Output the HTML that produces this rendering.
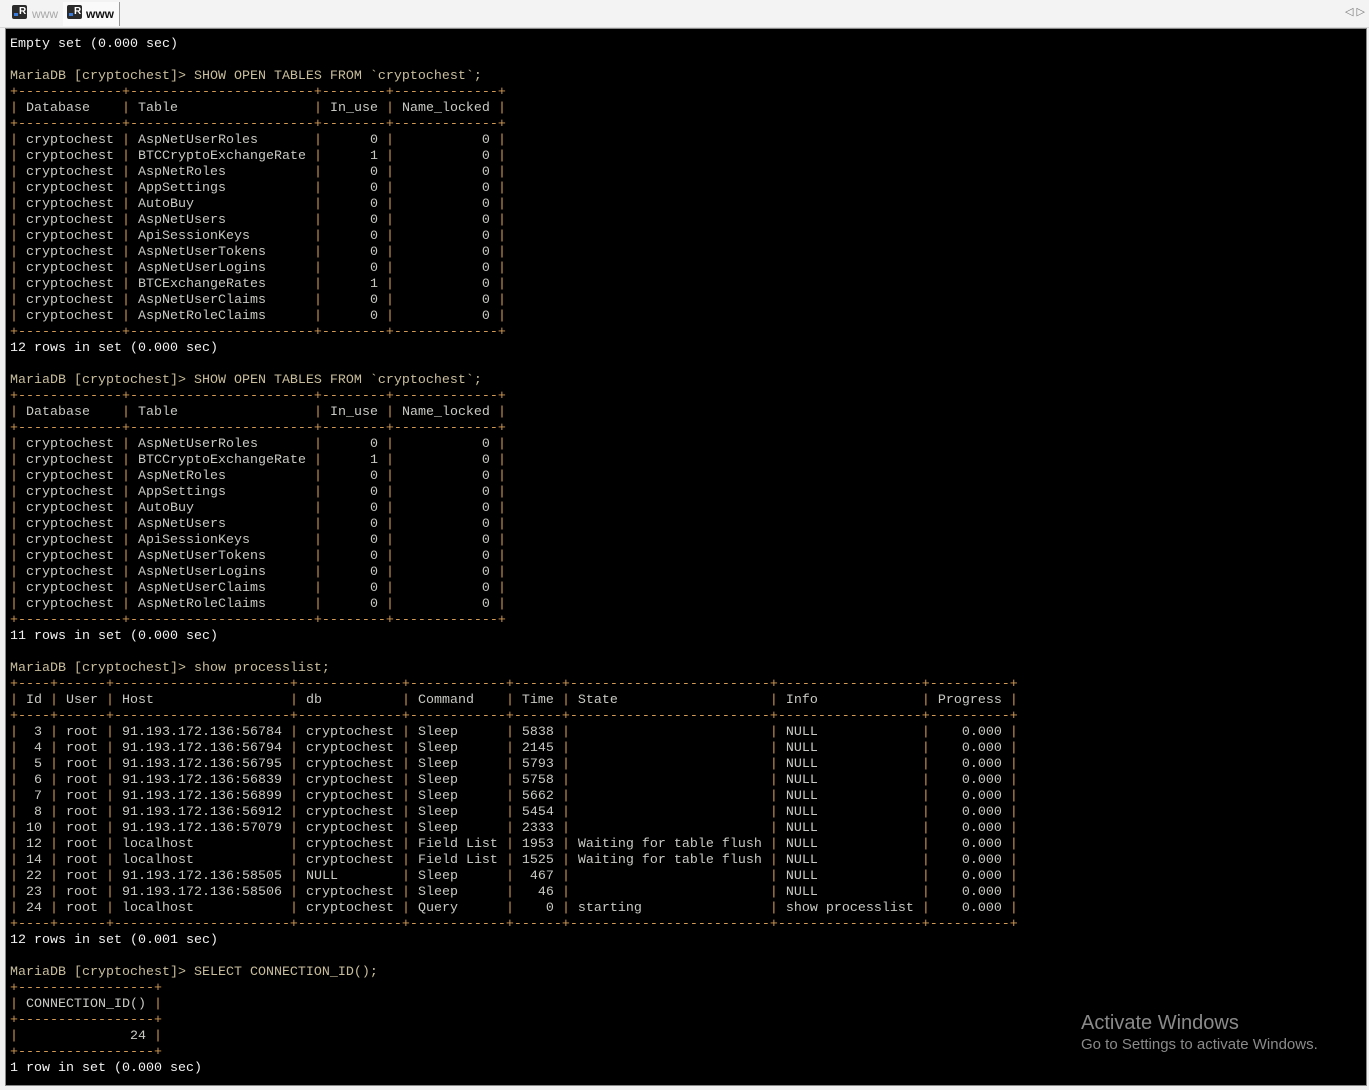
<!DOCTYPE html>
<html><head><meta charset="utf-8"><style>
html,body{margin:0;padding:0;width:1369px;height:1090px;overflow:hidden;background:#f0f0f0;font-family:"Liberation Sans",sans-serif}
#bar{position:absolute;left:0;top:0;width:1369px;height:27px;background:#f3f3f3;border-bottom:1px solid #d8d8d8}
.ico{position:absolute;top:5px;width:15px;height:14px;background:#2a2a2a;border-radius:2px}
.ico i{position:absolute;left:2px;bottom:3px;width:4px;height:3px;background:#3a7ad8}
.ico s{position:absolute;left:7px;top:1px;color:#fff;font:bold 10px "Liberation Sans",sans-serif;text-decoration:none}
#term{position:absolute;left:5px;top:28px;width:1360px;height:1056px;background:#000;border:1px solid #888}
pre{position:absolute;left:10px;top:37px;margin:0;font-family:"Liberation Mono",monospace;font-size:13.33px;line-height:16px;color:#c9c9c4}
b{font-weight:normal;color:#d39a55}
.w{color:#f2f2f2}.p{color:#c8bd9c}
#act{position:absolute;left:1081px;top:1012px;color:#8a8a8a}
</style></head><body>
<div id="bar">
<div class="ico" style="left:12px"><i></i><s>R</s></div>
<span style="position:absolute;left:32px;top:7px;font-size:12px;color:#a8a8a8">www</span>
<div style="position:absolute;left:63px;top:2px;width:56px;height:24px;background:#fafafa;border-right:1px solid #999"></div>
<div class="ico" style="left:67px"><i></i><s>R</s></div>
<span style="position:absolute;left:86px;top:7px;font-size:12px;font-weight:bold;color:#111">www</span>
<span style="position:absolute;left:1345px;top:5px;font-size:11px;color:#777">◁ ▷</span>
</div>
<div id="term"></div>
<pre><span class="w">Empty set (0.000 sec)</span>

<span class="p">MariaDB [cryptochest]&gt; SHOW OPEN TABLES FROM `cryptochest`;</span>
<b>+-------------+-----------------------+--------+-------------+</b>
<b>|</b> Database    <b>|</b> Table                 <b>|</b> In_use <b>|</b> Name_locked <b>|</b>
<b>+-------------+-----------------------+--------+-------------+</b>
<b>|</b> cryptochest <b>|</b> AspNetUserRoles       <b>|</b>      0 <b>|</b>           0 <b>|</b>
<b>|</b> cryptochest <b>|</b> BTCCryptoExchangeRate <b>|</b>      1 <b>|</b>           0 <b>|</b>
<b>|</b> cryptochest <b>|</b> AspNetRoles           <b>|</b>      0 <b>|</b>           0 <b>|</b>
<b>|</b> cryptochest <b>|</b> AppSettings           <b>|</b>      0 <b>|</b>           0 <b>|</b>
<b>|</b> cryptochest <b>|</b> AutoBuy               <b>|</b>      0 <b>|</b>           0 <b>|</b>
<b>|</b> cryptochest <b>|</b> AspNetUsers           <b>|</b>      0 <b>|</b>           0 <b>|</b>
<b>|</b> cryptochest <b>|</b> ApiSessionKeys        <b>|</b>      0 <b>|</b>           0 <b>|</b>
<b>|</b> cryptochest <b>|</b> AspNetUserTokens      <b>|</b>      0 <b>|</b>           0 <b>|</b>
<b>|</b> cryptochest <b>|</b> AspNetUserLogins      <b>|</b>      0 <b>|</b>           0 <b>|</b>
<b>|</b> cryptochest <b>|</b> BTCExchangeRates      <b>|</b>      1 <b>|</b>           0 <b>|</b>
<b>|</b> cryptochest <b>|</b> AspNetUserClaims      <b>|</b>      0 <b>|</b>           0 <b>|</b>
<b>|</b> cryptochest <b>|</b> AspNetRoleClaims      <b>|</b>      0 <b>|</b>           0 <b>|</b>
<b>+-------------+-----------------------+--------+-------------+</b>
<span class="w">12 rows in set (0.000 sec)</span>

<span class="p">MariaDB [cryptochest]&gt; SHOW OPEN TABLES FROM `cryptochest`;</span>
<b>+-------------+-----------------------+--------+-------------+</b>
<b>|</b> Database    <b>|</b> Table                 <b>|</b> In_use <b>|</b> Name_locked <b>|</b>
<b>+-------------+-----------------------+--------+-------------+</b>
<b>|</b> cryptochest <b>|</b> AspNetUserRoles       <b>|</b>      0 <b>|</b>           0 <b>|</b>
<b>|</b> cryptochest <b>|</b> BTCCryptoExchangeRate <b>|</b>      1 <b>|</b>           0 <b>|</b>
<b>|</b> cryptochest <b>|</b> AspNetRoles           <b>|</b>      0 <b>|</b>           0 <b>|</b>
<b>|</b> cryptochest <b>|</b> AppSettings           <b>|</b>      0 <b>|</b>           0 <b>|</b>
<b>|</b> cryptochest <b>|</b> AutoBuy               <b>|</b>      0 <b>|</b>           0 <b>|</b>
<b>|</b> cryptochest <b>|</b> AspNetUsers           <b>|</b>      0 <b>|</b>           0 <b>|</b>
<b>|</b> cryptochest <b>|</b> ApiSessionKeys        <b>|</b>      0 <b>|</b>           0 <b>|</b>
<b>|</b> cryptochest <b>|</b> AspNetUserTokens      <b>|</b>      0 <b>|</b>           0 <b>|</b>
<b>|</b> cryptochest <b>|</b> AspNetUserLogins      <b>|</b>      0 <b>|</b>           0 <b>|</b>
<b>|</b> cryptochest <b>|</b> AspNetUserClaims      <b>|</b>      0 <b>|</b>           0 <b>|</b>
<b>|</b> cryptochest <b>|</b> AspNetRoleClaims      <b>|</b>      0 <b>|</b>           0 <b>|</b>
<b>+-------------+-----------------------+--------+-------------+</b>
<span class="w">11 rows in set (0.000 sec)</span>

<span class="p">MariaDB [cryptochest]&gt; show processlist;</span>
<b>+----+------+----------------------+-------------+------------+------+-------------------------+------------------+----------+</b>
<b>|</b> Id <b>|</b> User <b>|</b> Host                 <b>|</b> db          <b>|</b> Command    <b>|</b> Time <b>|</b> State                   <b>|</b> Info             <b>|</b> Progress <b>|</b>
<b>+----+------+----------------------+-------------+------------+------+-------------------------+------------------+----------+</b>
<b>|</b>  3 <b>|</b> root <b>|</b> 91.193.172.136:56784 <b>|</b> cryptochest <b>|</b> Sleep      <b>|</b> 5838 <b>|</b>                         <b>|</b> NULL             <b>|</b>    0.000 <b>|</b>
<b>|</b>  4 <b>|</b> root <b>|</b> 91.193.172.136:56794 <b>|</b> cryptochest <b>|</b> Sleep      <b>|</b> 2145 <b>|</b>                         <b>|</b> NULL             <b>|</b>    0.000 <b>|</b>
<b>|</b>  5 <b>|</b> root <b>|</b> 91.193.172.136:56795 <b>|</b> cryptochest <b>|</b> Sleep      <b>|</b> 5793 <b>|</b>                         <b>|</b> NULL             <b>|</b>    0.000 <b>|</b>
<b>|</b>  6 <b>|</b> root <b>|</b> 91.193.172.136:56839 <b>|</b> cryptochest <b>|</b> Sleep      <b>|</b> 5758 <b>|</b>                         <b>|</b> NULL             <b>|</b>    0.000 <b>|</b>
<b>|</b>  7 <b>|</b> root <b>|</b> 91.193.172.136:56899 <b>|</b> cryptochest <b>|</b> Sleep      <b>|</b> 5662 <b>|</b>                         <b>|</b> NULL             <b>|</b>    0.000 <b>|</b>
<b>|</b>  8 <b>|</b> root <b>|</b> 91.193.172.136:56912 <b>|</b> cryptochest <b>|</b> Sleep      <b>|</b> 5454 <b>|</b>                         <b>|</b> NULL             <b>|</b>    0.000 <b>|</b>
<b>|</b> 10 <b>|</b> root <b>|</b> 91.193.172.136:57079 <b>|</b> cryptochest <b>|</b> Sleep      <b>|</b> 2333 <b>|</b>                         <b>|</b> NULL             <b>|</b>    0.000 <b>|</b>
<b>|</b> 12 <b>|</b> root <b>|</b> localhost            <b>|</b> cryptochest <b>|</b> Field List <b>|</b> 1953 <b>|</b> Waiting for table flush <b>|</b> NULL             <b>|</b>    0.000 <b>|</b>
<b>|</b> 14 <b>|</b> root <b>|</b> localhost            <b>|</b> cryptochest <b>|</b> Field List <b>|</b> 1525 <b>|</b> Waiting for table flush <b>|</b> NULL             <b>|</b>    0.000 <b>|</b>
<b>|</b> 22 <b>|</b> root <b>|</b> 91.193.172.136:58505 <b>|</b> NULL        <b>|</b> Sleep      <b>|</b>  467 <b>|</b>                         <b>|</b> NULL             <b>|</b>    0.000 <b>|</b>
<b>|</b> 23 <b>|</b> root <b>|</b> 91.193.172.136:58506 <b>|</b> cryptochest <b>|</b> Sleep      <b>|</b>   46 <b>|</b>                         <b>|</b> NULL             <b>|</b>    0.000 <b>|</b>
<b>|</b> 24 <b>|</b> root <b>|</b> localhost            <b>|</b> cryptochest <b>|</b> Query      <b>|</b>    0 <b>|</b> starting                <b>|</b> show processlist <b>|</b>    0.000 <b>|</b>
<b>+----+------+----------------------+-------------+------------+------+-------------------------+------------------+----------+</b>
<span class="w">12 rows in set (0.001 sec)</span>

<span class="p">MariaDB [cryptochest]&gt; SELECT CONNECTION_ID();</span>
<b>+-----------------+</b>
<b>|</b> CONNECTION_ID() <b>|</b>
<b>+-----------------+</b>
<b>|</b>              24 <b>|</b>
<b>+-----------------+</b>
<span class="w">1 row in set (0.000 sec)</span></pre>
<div id="act"><div style="font-size:20px">Activate Windows</div><div style="font-size:15px;margin-top:1px">Go to Settings to activate Windows.</div></div>
</body></html>
